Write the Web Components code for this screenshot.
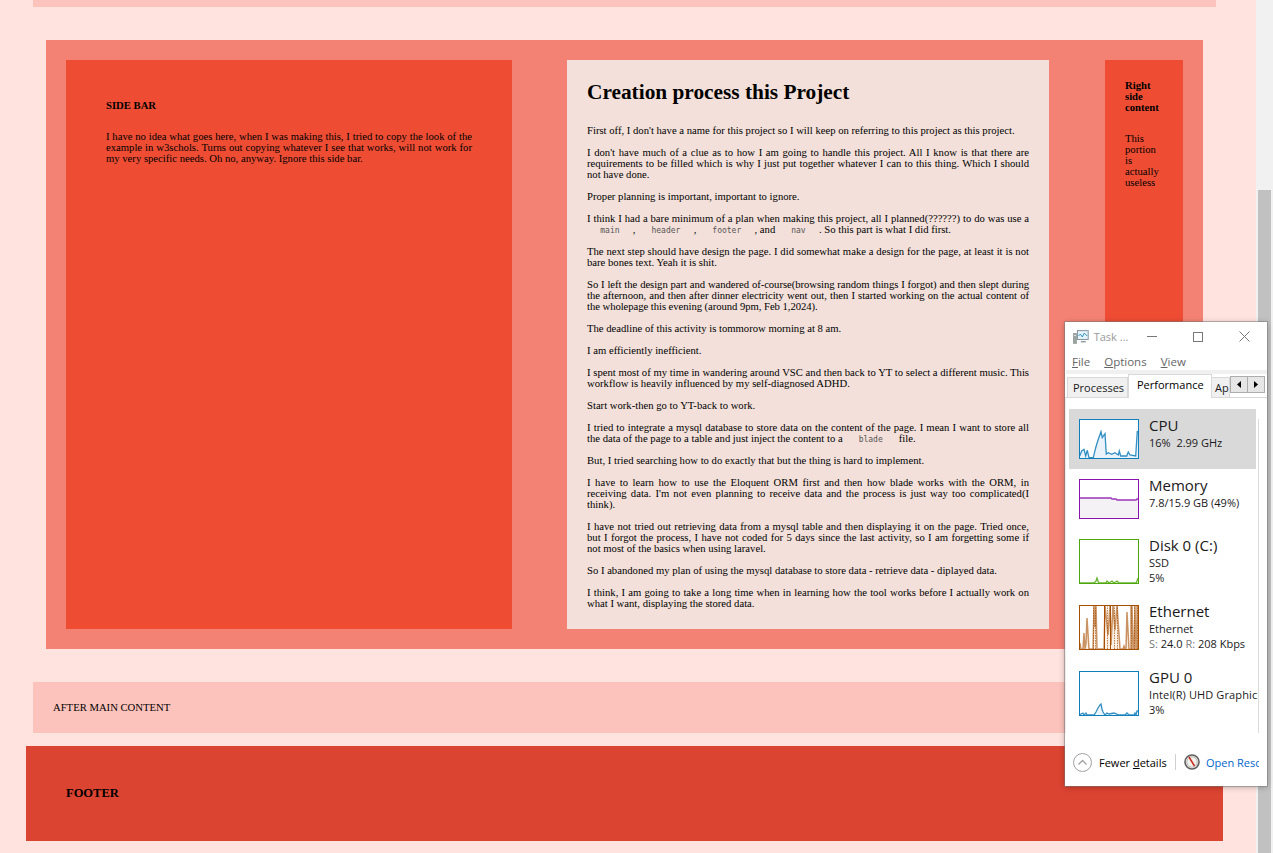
<!DOCTYPE html>
<html>
<head>
<meta charset="utf-8">
<title>Creation process</title>
<style>
  html, body { margin: 0; padding: 0; height: 853px; overflow: hidden; background: #FFE3DF; }
  body { font-family: "Liberation Serif", serif; font-size: 10.67px; line-height: 11px; color: #000; }
</style>
</head>
<body>
<site-page>
  <site-block kind="top"></site-block>
  <site-main>
    <site-side slot="side">
      <h4>SIDE BAR</h4>
      <p>I have no idea what goes here, when I was making this, I tried to copy the look of the example in w3schols. Turns out copying whatever I see that works, will not work for my very specific needs. Oh no, anyway. Ignore this side bar.</p>
    </site-side>
    <site-article slot="article">
      <h2>Creation process this Project</h2>
      <p>First off, I don't have a name for this project so I will keep on referring to this project as this project.</p>
      <p>I don't have much of a clue as to how I am going to handle this project. All I know is that there are requirements to be filled which is why I just put together whatever I can to this thing. Which I should not have done.</p>
      <p>Proper planning is important, important to ignore.</p>
      <p>I think I had a bare minimum of a plan when making this project, all I planned(??????) to do was use a <code-chip>main</code-chip>, <code-chip>header</code-chip>, <code-chip>footer</code-chip>, and <code-chip>nav</code-chip>. So this part is what I did first.</p>
      <p>The next step should have design the page. I did somewhat make a design for the page, at least it is not bare bones text. Yeah it is shit.</p>
      <p style="letter-spacing:-.05px">So I left the design part and wandered of-course(browsing random things I forgot) and then slept during the afternoon, and then after dinner electricity went out, then I started working on the actual content of the wholepage this evening (around 9pm, Feb 1,2024).</p>
      <p>The deadline of this activity is tommorow morning at 8 am.</p>
      <p>I am efficiently inefficient.</p>
      <p>I spent most of my time in wandering around VSC and then back to YT to select a different music. This workflow is heavily influenced by my self-diagnosed ADHD.</p>
      <p>Start work-then go to YT-back to work.</p>
      <p>I tried to integrate a mysql database to store data on the content of the page. I mean I want to store all the data of the page to a table and just inject the content to a <code-chip>blade</code-chip> file.</p>
      <p>But, I tried searching how to do exactly that but the thing is hard to implement.</p>
      <p>I have to learn how to use the Eloquent ORM first and then how blade works with the ORM, in receiving data. I'm not even planning to receive data and the process is just way too complicated(I think).</p>
      <p>I have not tried out retrieving data from a mysql table and then displaying it on the page. Tried once, but I forgot the process, I have not coded for 5 days since the last activity, so I am forgetting some if not most of the basics when using laravel.</p>
      <p>So I abandoned my plan of using the mysql database to store data - retrieve data - diplayed data.</p>
      <p>I think, I am going to take a long time when in learning how the tool works before I actually work on what I want, displaying the stored data.</p>
    </site-article>
    <site-aside slot="aside">
      <h4>Right side content</h4>
      <p>This portion is actually useless</p>
    </site-aside>
  </site-main>
  <site-block kind="after">AFTER MAIN CONTENT</site-block>
  <site-footer>FOOTER</site-footer>
</site-page>
<task-window></task-window>

<script>
// page shell: content column + scrollbar
class SitePage extends HTMLElement {
  constructor() {
    super();
    this.attachShadow({ mode: 'open' }).innerHTML = `
      <style>
        :host { display: flex; width: 1273px; height: 853px; }
        .col { width: 1256px; display: flex; flex-direction: column; align-items: stretch; }
        .bar { width: 17px; background: #f1f1f1; padding-top: 190px; box-sizing: border-box; display: flex; justify-content: center; }
        .thumb { width: 13px; height: 663px; background: #c1c1c1; }
      </style>
      <div class="col"><slot></slot></div>
      <div class="bar"><div class="thumb"></div></div>`;
  }
}

class SiteBlock extends HTMLElement {
  constructor() {
    super();
    this.attachShadow({ mode: 'open' }).innerHTML = `
      <style>
        :host { display: flex; align-items: center; margin: 0 40px 0 33px; background: #FCC3BC; padding-left: 20px; }
        :host([kind="top"]) { height: 7px; margin-bottom: 33px; }
        :host([kind="after"]) { height: 51px; margin-top: 33px; margin-bottom: 13px; }
      </style>
      <slot></slot>`;
  }
}

class SiteMain extends HTMLElement {
  constructor() {
    super();
    this.attachShadow({ mode: 'open' }).innerHTML = `
      <style>
        :host { display: grid; grid-template-columns: 446px 55px 482px 56px 78px; grid-template-rows: 569px; margin: 0 53px 0 46px; padding: 20px; background: #F48274; }
        ::slotted([slot="article"]) { grid-column: 3; }
        ::slotted([slot="aside"]) { grid-column: 5; }
      </style>
      <slot name="side"></slot>
      <slot name="article"></slot>
      <slot name="aside"></slot>`;
  }
}

const proseCss = `
  ::slotted(h4) { margin: 0 0 20px; font-size: 10.67px; font-weight: bold; }
  ::slotted(p) { margin: 0; }
`;

class SiteSide extends HTMLElement {
  constructor() {
    super();
    this.attachShadow({ mode: 'open' }).innerHTML = `
      <style>
        :host { display: block; background: #EE4D34; padding: 40px; text-align: justify; }
        ${proseCss}
      </style>
      <slot></slot>`;
  }
}

class SiteAside extends HTMLElement {
  constructor() {
    super();
    this.attachShadow({ mode: 'open' }).innerHTML = `
      <style>
        :host { display: block; background: #EE4D34; padding: 20px; }
        ${proseCss}
      </style>
      <slot></slot>`;
  }
}

class SiteArticle extends HTMLElement {
  constructor() {
    super();
    this.attachShadow({ mode: 'open' }).innerHTML = `
      <style>
        :host { display: block; background: #F3E0DA; padding: 20px; text-align: justify; }
        ::slotted(h2) { margin: 0 0 21px; font-size: 21.33px; line-height: 24px; font-weight: bold; text-align: left; }
        ::slotted(p) { margin: 0 0 11px; }
        ::slotted(p:last-child) { margin-bottom: 0; }
      </style>
      <slot></slot>`;
  }
}

class CodeChip extends HTMLElement {
  constructor() {
    super();
    this.attachShadow({ mode: 'open' }).innerHTML = `
      <style>
        :host { display: inline; font-family: "DejaVu Sans Mono", monospace; font-size: 8px; line-height: 8px; color: #555; padding: 0 13.3px; }
      </style>
      <slot></slot>`;
  }
}

class SiteFooter extends HTMLElement {
  constructor() {
    super();
    this.attachShadow({ mode: 'open' }).innerHTML = `
      <style>
        :host { display: flex; align-items: center; height: 95px; margin: 0 33px 0 26px; padding-left: 40px; background: #DB4430; font-size: 12.5px; font-weight: bold; }
      </style>
      <slot></slot>`;
  }
}

// Performance list row: graph + lines of text
class PerfRow extends HTMLElement {
  connectedCallback() {
    const color = this.getAttribute('color');
    const name = this.getAttribute('name');
    const line = this.innerHTML;
    const points = this.getAttribute('points');
    const fill = this.getAttribute('fill') || 'none';
    const h = Number(this.getAttribute('graph') || 40);
    const weight = this.getAttribute('weight') || 1.3;
    const alpha = this.getAttribute('alpha') || .85;
    const solid = (this.getAttribute('bars') || '').split(' ').filter(Boolean).map(x =>
      `<path d="M${x} 0V${h}" stroke="${color}"/>`).join('');
    const dotted = (this.getAttribute('dots') || '').split(' ').filter(Boolean).map(x =>
      `<path d="M${x} 0V${h}" stroke="${color}" stroke-opacity=".7" stroke-dasharray="1.500 1"/>`).join('');
    const root = this.attachShadow({ mode: 'open' });
    root.innerHTML = `
      <style>
        :host { display: flex; flex: none; gap: 10px; width: 177px; padding: 10px 0 0 10px; height: ${h === 40 ? 50 : 56}px; }
        :host([active]) { background: #d9d9d9; }
        svg { flex: none; width: 60px; height: ${h}px; display: block; }
        .txt { margin-top: -3px; white-space: nowrap; }
        .name { font-size: 15px; line-height: 19px; color: #1a1a1a; }
        .sub { font-size: 11px; line-height: 15px; color: #1a1a1a; }
      </style>
      <svg viewBox="0 0 60 ${h}">
        <rect x="0" y="0" width="60" height="${h}" fill="#fff"/>
        <polygon points="0,${h} ${points} 60,${h}" fill="${fill}"/>
        ${dotted}${solid}
        <polyline points="${points}" fill="none" stroke="${color}" stroke-width="${weight}" stroke-opacity="${alpha}"/>
        <rect x=".5" y=".5" width="59" height="${h - 1}" fill="none" stroke="${color}"/>
      </svg>
      <div class="txt">
        <div class="name">${name}</div>
        <div class="sub">${line}</div>
      </div>`;
  }
}

class TaskWindow extends HTMLElement {
  constructor() {
    super();
    this.attachShadow({ mode: 'open' }).innerHTML = `
      <style>
        :host { position: absolute; left: 1065px; top: 322px; width: 202px; height: 464px; background: #fff; box-shadow: 0 0 0 1px rgba(120,120,120,.5), 0 1px 6px rgba(0,0,0,.3); font-family: "Open Sans", "Noto Sans", sans-serif; font-size: 11px; color: #1a1a1a; display: flex; flex-direction: column; overflow: hidden; }
        .title { display: flex; flex: none; align-items: center; height: 29px; padding-left: 8px; color: #999; font-size: 11px; }
        .title svg.app { margin-right: 5px; }
        .title .t { width: 36px; white-space: nowrap; }
        .btn { flex: none; width: 46px; display: flex; justify-content: center; }
        .menu { display: flex; flex: none; gap: 14px; padding: 2px 0 0 7px; height: 17px; align-items: center; color: #666; font-size: 11.5px; }
        u { text-underline-offset: 1px; }
        .band { flex: none; height: 4px; background: #f0f0f0; margin-left: 1px; }
        .tabs { display: flex; flex: none; align-items: flex-end; height: 23px; padding-left: 2px; border-bottom: 1px solid #d9d9d9; position: relative; }
        .tab { flex: none; box-sizing: border-box; height: 20px; line-height: 19px; background: #f0f0f0; border: 1px solid #d9d9d9; border-bottom: 0; }
        .tab.proc { width: 61px; padding-left: 5px; }
        .tab.perf { width: 84px; height: 24px; background: #fff; padding-left: 8px; line-height: 20px; margin-bottom: -1px; color: #000; }
        .tab.app { width: 18px; padding-left: 3px; border-left: 0; overflow: hidden; white-space: nowrap; }
        .arrows { position: absolute; right: 2px; top: 2px; display: flex; }
        .arrows span { width: 18px; height: 17px; background: #e6e6e6; border: 1px solid #adadad; box-sizing: border-box; display: flex; align-items: center; justify-content: center; }
        .arrows span + span { margin-left: -1px; }
        .list { position: relative; flex: none; box-sizing: border-box; width: 194px; height: 335px; padding: 11px 0 0 3px; border-left: 1px solid #ececec; overflow: hidden; }
        .rail { position: absolute; right: 0; top: 21px; bottom: 0; width: 1px; background: #dcdcdc; }
        .foot { flex: none; box-sizing: border-box; width: 194px; height: 53px; padding: 5px 0 0 8px; display: flex; align-items: center; white-space: nowrap; overflow: hidden; color: #000; }
        .sep { flex: none; width: 1px; height: 16px; background: #d0d0d0; margin: 0 8px; }
        .link { color: #0066cc; margin-left: 6px; }
      </style>
      <div class="title">
        <svg class="app" width="16" height="16" viewBox="0 0 16 16">
          <rect x="0" y="4" width="4" height="11" fill="#9aa39f"/>
          <rect x="1" y="6" width="2" height="1" fill="#e4e8e6"/>
          <rect x="4.500" y="1.500" width="11" height="9" fill="#e6f3fa" stroke="#7f929b"/>
          <path d="M5.500 7l2-2 2 3 2-4 3 3" fill="none" stroke="#2b96c8"/>
          <path d="M8 12h5v1.500H8z" fill="#8f9a9e"/>
        </svg>
        <span class="t">Task ...</span>
        <span class="btn"><svg width="10" height="10"><path d="M0 4.500h10" stroke="#777"/></svg></span>
        <span class="btn"><svg width="10" height="10"><rect x=".5" y=".5" width="9" height="9" fill="none" stroke="#777"/></svg></span>
        <span class="btn"><svg width="11" height="11"><path d="M.5.5l10 10M10.500 .5l-10 10" stroke="#777"/></svg></span>
      </div>
      <div class="menu"><span><u>F</u>ile</span><span><u>O</u>ptions</span><span><u>V</u>iew</span></div>
      <div class="band"></div>
      <div class="tabs">
        <span class="tab proc">Processes</span><span class="tab perf">Performance</span><span class="tab app">Ap</span>
        <div class="arrows">
          <span><svg width="4" height="7"><path d="M4 0v7L0 3.500z" fill="#000"/></svg></span>
          <span><svg width="4" height="7"><path d="M0 0v7l4-3.500z" fill="#000"/></svg></span>
        </div>
      </div>
      <div class="list">
        <perf-row active name="CPU" color="#117dbb" fill="#eaf3f9" points="0.7,37 2.700,32 5,30.300 6.700,37 8.300,31.300 10,38.700 14.300,38.700 16.700,28.700 18.700,22 22,12.700 23.300,18.700 26,14.700 27.300,35 29.300,33.700 32.700,35.300 36,33.700 39.300,36 40.300,32 41.700,37 47.700,37 49.300,33 51,36 56.700,37 58.300,12 59,13.700">16%&nbsp; 2.99 GHz</perf-row>
        <perf-row name="Memory" color="#8b12ae" fill="#f4f2f4" points="0,19 32,19 33,20 37,20 38,21 57,21 58,20 60,20">7.8/15.9 GB (49%)</perf-row>
        <perf-row graph="45" name="Disk 0 (C:)" color="#4da60c" fill="#eff7e8" points="0,44 15,44 17,42 18,39 19,42 20,44 27,44 28,42 30,44 33,42 35,44 38,42 40,44 57,44 58,42 59,39">SSD<br>5%</perf-row>
        <perf-row graph="45" name="Ethernet" color="#a74f01" fill="#fcf1e8" weight="1.5" alpha=".6" bars="25.500 31.500" dots="14.500 16.500 28.500 35.500 38.500 52.500 55.500 58.500" points="0,44 1,38 2,44 4,44 5,28 6,44 7,38 8,13 10,44 14,44 15,0 16,22 17,0 18,44 25,44 26,0 29,30 31,0 32,40 34,0 36,25 38,0 41,44 44,44 45,41 46,44 47,44 48,7 50,44 52,44 52,0 53,0 54,44 55,44 56,0 57,44 58,44 58,0 59,0">Ethernet<br><span style="color:#777">S:</span> 24.0 <span style="color:#777">R:</span> 208 Kbps</perf-row>
        <perf-row graph="45" name="GPU 0" color="#117dbb" fill="#ecf5fa" points="0,44 4,42 5,44 7,42 8,44 15,44 17,41 19,37 21,34 22,33 23,38 24,41 26,44 28,42 30,43 35,42 40,44 46,44 48,42 50,44 55,44 56,42 57,44 58,40 59,40"><span style="letter-spacing:.12px">Intel(R) UHD Graphic</span><br>3%</perf-row>
        <div class="rail"></div>
      </div>
      <div class="foot">
        <svg width="19" height="19" viewBox="0 0 19 19" style="flex:none"><circle cx="9.500" cy="9.500" r="9" fill="#fff" stroke="#a0a0a0"/><path d="M5.500 11.500l4-4 4 4" fill="none" stroke="#a0a0a0" stroke-width="1.300"/></svg>
        <span style="margin-left:7px;width:68px;flex:none">Fewer <u>d</u>etails</span>
        <span class="sep"></span>
        <svg width="16" height="16" viewBox="0 0 16 16" style="flex:none"><circle cx="8" cy="8" r="7" fill="#f4f1ea" stroke="#5f5f5f" stroke-width="1.600"/><circle cx="8" cy="8" r="5.200" fill="none" stroke="#b9b9b9"/><path d="M5 3l5.500 9" stroke="#c8281c" stroke-width="1.500"/></svg>
        <span class="link">Open Resc</span>
      </div>`;
  }
}

customElements.define('site-page', SitePage);
customElements.define('site-block', SiteBlock);
customElements.define('site-main', SiteMain);
customElements.define('site-side', SiteSide);
customElements.define('site-aside', SiteAside);
customElements.define('site-article', SiteArticle);
customElements.define('code-chip', CodeChip);
customElements.define('site-footer', SiteFooter);
customElements.define('perf-row', PerfRow);
customElements.define('task-window', TaskWindow);
</script>
</body>
</html>
